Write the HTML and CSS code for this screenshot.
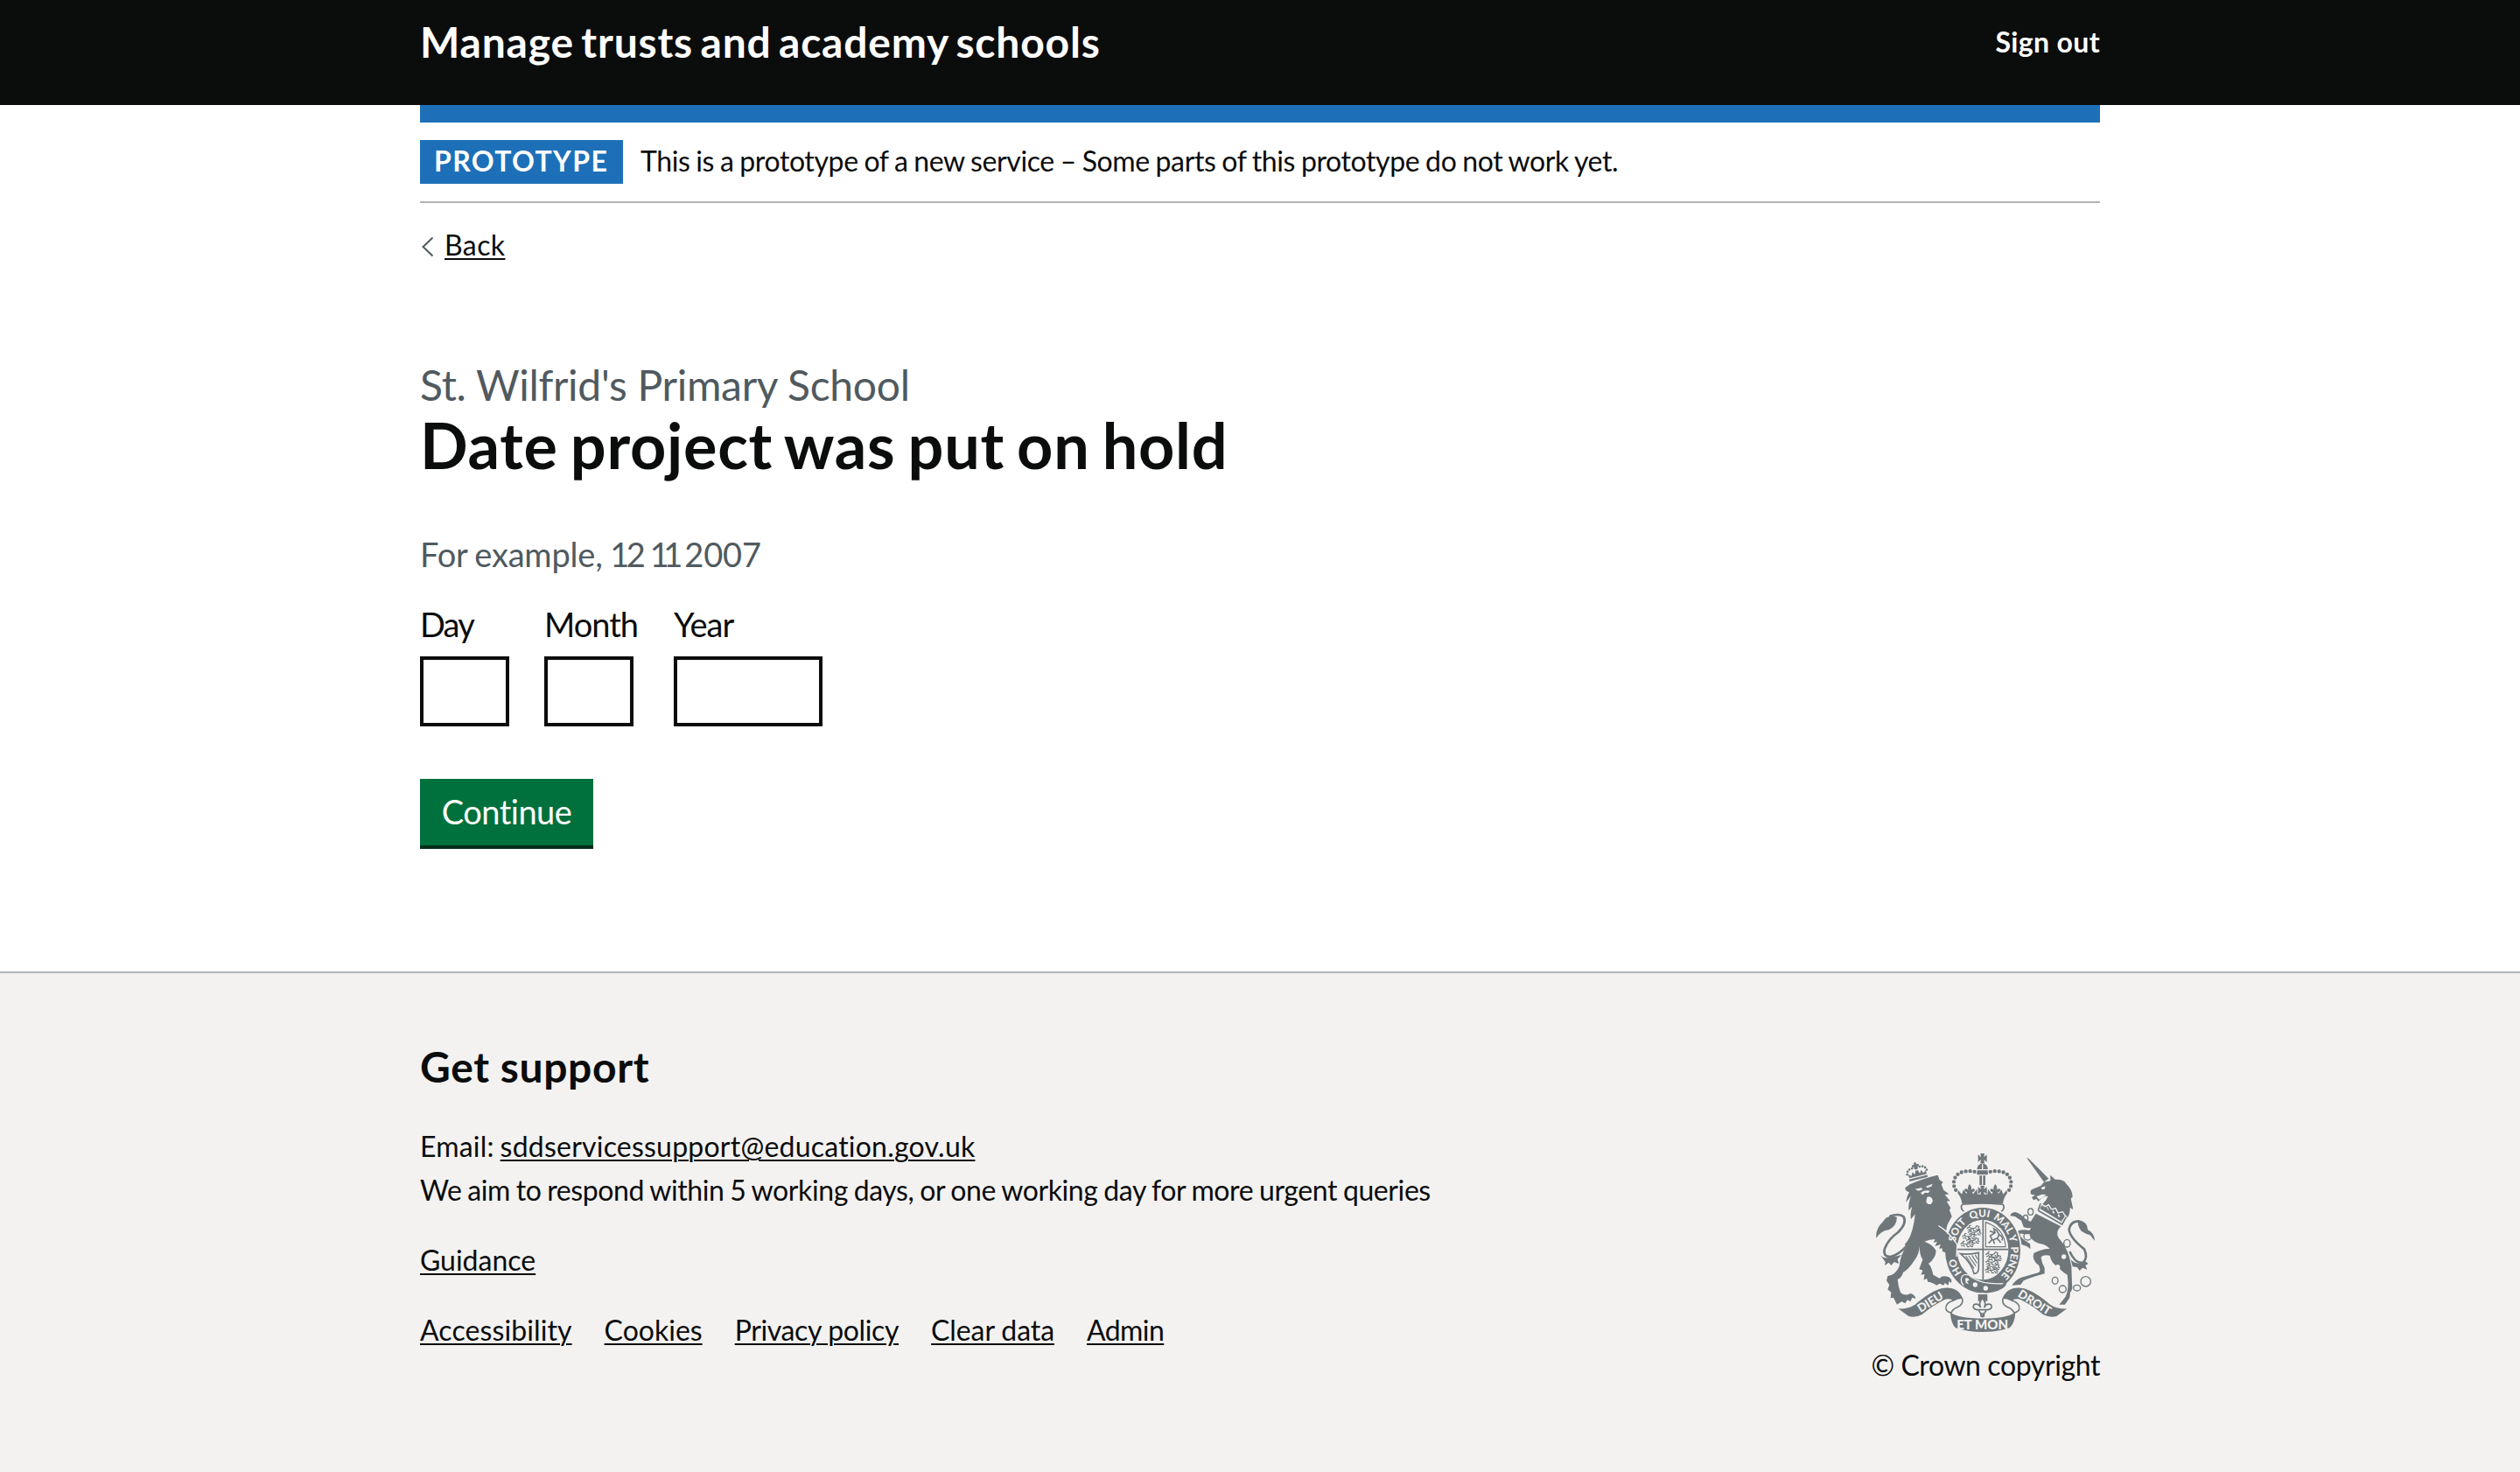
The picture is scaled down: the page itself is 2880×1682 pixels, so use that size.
FILE: index.html
```html
<!DOCTYPE html>
<html lang="en">
<head>
<meta charset="utf-8">
<title>Date project was put on hold - Manage trusts and academy schools</title>
<link rel="stylesheet" href="styles.css">
</head>
<body>
<header class="header">
  <div class="container header-row">
    <a class="service-name" href="#">Manage trusts and academy schools</a>
    <a class="sign-out" href="#">Sign out</a>
  </div>
</header>

<div class="container page">
  <div class="phase-banner">
    <strong class="tag">PROTOTYPE</strong>
    <span class="phase-text">This is a prototype of a new service – Some parts of this prototype do not work yet.</span>
  </div>
  <a class="back-link" href="#"><svg class="chevron" viewBox="0 0 16 26"><path d="M14.500 2.500 L3.500 13 L14.500 23.500"/></svg><span class="link">Back</span></a>
  <main class="main">
    <span class="caption">St. Wilfrid's Primary School</span>
    <h1 class="heading">Date project was put on hold</h1>
    <form>
      <div class="hint">For example, <span class="num-a">12</span> <span class="num-b">11</span> 2007</div>
      <div class="date-input">
        <div class="field field-day"><label for="day" class="label label-day">Day</label><input id="day" class="input" type="text"></div>
        <div class="field field-month"><label for="month" class="label">Month</label><input id="month" class="input" type="text"></div>
        <div class="field"><label for="year" class="label">Year</label><input id="year" class="input input-year" type="text"></div>
      </div>
      <button class="button" type="button">Continue</button>
    </form>
  </main>
</div>

<footer class="footer">
  <div class="container footer-row">
    <div class="support">
      <h2 class="support-title">Get support</h2>
      <p class="support-text"><span class="email-label">Email: </span><a class="link email" href="#">sddservicessupport@education.gov.uk</a><br><span class="response">We aim to respond within 5 working days, or one working day for more urgent queries</span></p>
      <p class="support-text"><a class="link" href="#">Guidance</a></p>
      <ul class="footer-links">
        <li><a class="link accessibility" href="#">Accessibility</a></li>
        <li><a class="link" href="#">Cookies</a></li>
        <li><a class="link privacy" href="#">Privacy policy</a></li>
        <li><a class="link clear" href="#">Clear data</a></li>
        <li><a class="link admin" href="#">Admin</a></li>
      </ul>
    </div>
    <div class="crown">
      <svg class="crest" viewBox="72 54 750 612">
        <defs>
          <path id="garter" d="M438 499 A97 114 0 0 1 438 271 A97 114 0 0 1 438 499"/>
          <g id="fleur"><path d="M0 -16 Q9 -5 5 4 Q14 -4 18 4 Q17 11 9 12 L12 20 H-12 L-9 12 Q-17 11 -18 4 Q-14 -4 -5 4 Q-9 -5 0 -16Z"/></g>
          <path id="cross" d="M-15 -13 L-5 -4 L-7 -17 H7 L5 -4 L15 -13 V13 L5 4 L7 17 H-7 L-5 4 L-15 13Z"/>
          <g id="lions">
            <path d="M0 8 q5 -8 12 -3 q10 4 18 -1 l3 -6 l8 2 l-2 8 l6 2 M2 14 l8 -4 l4 6 M20 8 l4 8 l7 -1 M32 8 l4 7 l7 0 M10 5 q-6 -10 4 -8"/>
          </g>
        </defs>

        <!-- central crown -->
        <use href="#cross" x="437" y="71"/>
        <path d="M418 108 Q420 90 437 88 Q454 90 456 108Z M418 112 H456 Q452 127 437 127 Q422 127 418 112Z"/>
        <path class="cut-line" d="M437 91 V109"/>
        <path d="M427 130 H435 V162 H427Z M439 130 H447 V162 H439Z"/>
        <path class="beads" d="M424 121 L408 116 L390 114 L373 116 L358 121 L346 131 L340 144 L338 158 L341 172 L349 185"/>
        <path class="beads" d="M450 121 L466 116 L484 114 L501 116 L516 121 L528 131 L534 144 L536 158 L533 172 L525 185"/>
        <path d="M352 190 L354 180 L366 194 L372 178 L382 192 Q396 195 406 192 L418 176 L420 194 H454 L456 176 L468 192 Q480 195 492 192 L502 178 L508 194 L520 180 L522 190 Q510 205 507 226 H367 Q364 205 352 190Z"/>
        <use href="#fleur" x="393" y="175"/><use href="#fleur" x="481" y="175"/><use href="#cross" x="437" y="181"/>
        <path class="line" d="M374 253 Q362 245 365 233 Q368 226 382 228 Q437 222 492 228 Q507 226 510 233 Q513 245 501 253"/>

        <!-- lion -->
        <path d="M172 172 L188 160 Q230 140 284 128 L290 145 L302 152 L296 160 L304 180 L322 193 L308 196 L326 217 L314 218 L328 241 L324 248 L332 270 L316 300 L312 322 L346 372 L344 402 L334 395 L336 412 L324 402 L314 412 L316 398 L300 390 L304 378 L288 380 L294 366 L274 372 L282 356 L270 360 L274 348 Q255 348 238 356 Q270 368 278 388 Q276 415 252 432 Q262 440 268 470 L290 482 Q300 470 322 478 Q334 486 330 498 L322 492 L320 506 L308 498 L304 506 L290 500 L280 506 Q262 494 250 494 L246 482 L236 488 L238 468 L226 470 L232 455 L220 450 Q228 430 232 418 Q220 400 222 372 Q218 404 204 420 Q185 450 165 462 Q160 480 146 486 Q148 510 156 530 Q170 545 190 534 Q206 538 208 552 L196 548 L190 562 L180 556 L172 568 L160 562 L144 572 Q138 560 132 548 L122 550 L124 530 L112 520 L118 505 L108 490 L112 474 Q140 470 152 440 Q155 400 178 372 L170 366 Q198 340 206 262 L192 280 Q188 262 196 236 L184 250 Q182 225 192 200 L174 222 Q178 200 186 186 Q172 184 172 172Z"/>
        <path class="cut" d="M205 176 L228 172 L232 177 L218 182Z M243 167 L266 158 L262 167 L248 172Z M225 190 Q235 178 257 182 L251 190 L240 188 L232 196Z M247 204 Q256 198 264 208 Q270 220 260 228 Q246 230 244 218Z"/>
        <g transform="rotate(-14 213 120)">
          <path class="beads small" d="M210 103 Q176 96 178 128 M216 103 Q250 96 248 128"/>
          <path d="M183 132 L181 118 L192 126 L198 114 L204 125 L209 112 H217 L222 125 L228 114 L234 126 L245 118 L243 132Z M181 136 H245 V143 H181Z"/>
          <path d="M209 84 H217 V91 H225 V99 H217 V108 H209 V99 H201 V91 H209Z"/>
        </g>
        <path class="tail" d="M184 364 Q150 402 122 408 Q94 408 102 380 Q114 348 148 324 Q180 292 166 270 Q148 258 118 270"/>
        <path d="M73 344 Q70 310 96 288 Q110 262 143 272 Q146 300 116 316 Q90 318 73 344Z M88 404 Q100 416 120 410 L160 402 L146 416 L150 432 L134 426 L124 438 L116 428 L102 438 L104 426Z"/>

        <!-- unicorn -->
        <path d="M588 68 L596 72 L664 140 L648 152Z"/>
        <path d="M648 152 L670 148 L670 128 L686 143 Q718 142 724 158 Q746 178 746 204 L740 208 L748 246 L737 240 Q738 262 728 274 L722 264 L712 282 L698 262 L690 268 L680 250 L668 256 L660 236 L648 242 L640 230 Q656 216 662 200 Q640 200 634 214 L628 218 L622 210 L612 214 L606 204 L618 197 L604 194 Q598 184 606 178 L638 164Z"/>
        <path class="cut" d="M638 172 L652 166 L650 176 L642 178Z M622 202 L642 194 L656 196 L632 212Z"/>
        <path class="cut-line" d="M638 226 L652 236 L664 230 L674 246 L688 242 L696 258 L712 254 L722 270"/>
        <path class="line" d="M628 250 L636 226 M628 250 L710 297 L724 272"/>
        <path d="M634 243 L640 232 L648 242 L656 236 L664 250 L674 246 L680 260 L692 256 L698 272 L712 268 L709 288Z"/>
        <path d="M620 260 L706 304 Q684 326 700 346 Q732 380 742 440 L744 500 Q748 520 738 530 L736 548 L720 572 L700 572 L722 545 Q735 520 728 470 Q708 458 700 446 Q672 430 668 404 Q645 400 638 410 Q640 430 650 446 L650 466 Q600 480 578 490 L568 504 L538 506 Q550 488 568 480 L630 462 Q638 455 630 437 Q605 420 613 396 Q636 382 668 380 Q652 364 630 362 Q600 352 598 330 Q580 332 566 328 Q564 340 580 350 L600 364 L602 381 L588 372 L560 362 L554 322 Q570 312 598 318 L604 308 Q590 312 578 306 L570 284 L548 270 L532 268 Q534 256 550 255 Q570 262 584 278 L602 288Z"/>
        <path class="tail" d="M736 390 Q756 434 782 428 Q800 412 786 382 Q738 344 734 316 Q738 286 768 286"/>
        <path d="M822 354 Q820 325 798 316 Q798 288 766 282 Q760 300 776 320 Q792 330 806 334Z M740 418 Q760 440 790 424 L800 432 L790 438 L796 452 L780 446 L770 456 L762 444 L746 442Z"/>
        <g class="chain">
          <ellipse cx="602" cy="254" rx="9" ry="11"/><ellipse cx="585" cy="275" rx="8" ry="10"/><circle cx="592" cy="338" r="13"/><ellipse cx="727" cy="362" rx="11" ry="13"/>
          <ellipse cx="686" cy="490" rx="10" ry="12"/><circle cx="712" cy="519" r="12"/><ellipse cx="761" cy="515" rx="12" ry="10"/><circle cx="791" cy="493" r="17"/>
        </g>
        <circle class="cut" cx="716" cy="408" r="8"/><circle class="cut" cx="695" cy="443" r="8"/>

        <!-- garter and shield -->
        <path class="halo" d="M438 240 A129 146 0 1 1 438 532 A129 146 0 1 1 438 240Z"/>
        <path fill-rule="evenodd" d="M438 240 A129 146 0 1 1 438 532 A129 146 0 1 1 438 240Z M438 281 A88 103 0 1 0 438 487 A88 103 0 1 0 438 281Z"/>
        <path class="cut-line" d="M286 302 Q322 322 350 366 L348 408"/>
        <path d="M270 296 Q318 320 346 368 L344 404 L334 394 L336 412 L324 402 L314 412 L316 398 L300 388 L296 366Z"/>
        <path class="line" d="M439 281 V487 M350 383 H526"/>
        <g class="motto">
          <text><textPath href="#garter" startOffset="16.5%">HO</textPath></text>
          <text><textPath href="#garter" startOffset="35%">SOIT</textPath></text>
          <text><textPath href="#garter" startOffset="48.500%">QUI</textPath></text>
          <text><textPath href="#garter" startOffset="63.300%">MAL Y</textPath></text>
          <text><textPath href="#garter" startOffset="81.500%">PENSE</textPath></text>
        </g>
        <g class="charge">
          <use href="#lions" x="384" y="304"/><use href="#lions" x="368" y="332"/><use href="#lions" x="362" y="358"/>
          <use href="#lions" x="388" y="318"/><use href="#lions" x="382" y="346"/>
          <use href="#lions" x="448" y="394"/><use href="#lions" x="458" y="406"/><use href="#lions" x="448" y="420"/><use href="#lions" x="452" y="436"/><use href="#lions" x="446" y="448"/>
          <path d="M448 290 V374 H516 Q514 312 448 290Z"/>
          <path class="thick" d="M458 362 L470 350 L464 336 L480 326 L476 312 L486 318 L494 332 L488 346 L500 360 M480 326 L462 320 M488 344 L474 350 L478 364 M494 332 Q510 340 504 352"/>
          <path class="thick" d="M362 398 Q392 402 424 394 V446 Q424 466 408 466 Q400 430 362 398Z"/>
          <path d="M380 405 L408 448 M390 405 L414 440 M401 403 L418 430 M412 401 L420 416"/>
        </g>
        <path d="M368 476 Q384 464 400 480 Q440 502 506 492 Q530 496 510 514 Q480 534 444 532 Q400 526 382 514 L370 500Z"/>
        <path class="cut" d="M378 482 Q388 478 392 488 L384 492 L390 502 L380 498Z"/>
        <path class="cut-line" d="M372 506 Q358 490 368 474 Q384 462 402 480 Q440 504 508 500"/>
        <circle class="cut" cx="412" cy="504" r="8"/><circle class="cut" cx="448" cy="516" r="8"/>

        <!-- scroll -->
        <g id="scroll-side">
          <path d="M148 586 Q182 588 206 572 Q262 524 300 516 Q352 508 370 552 Q354 550 338 560 Q324 548 306 556 Q266 576 230 606 Q208 618 184 612Z"/>
          <path class="line" d="M338 558 Q308 566 312 588 Q316 598 330 600 Q334 588 354 580 Q372 570 368 552"/>
        </g>
        <use href="#scroll-side" transform="translate(875 0) scale(-1 1)"/>
        <path d="M326 598 Q352 620 437 620 Q524 620 550 598 Q548 638 530 652 Q490 666 437 666 Q385 666 345 652 Q330 640 326 598Z"/>
        <g class="scroll-text">
          <text x="437" y="657">ET MON</text>
          <text class="scroll-end" transform="translate(262 570) rotate(-32)" y="6">DIEU</text>
          <text class="scroll-end" transform="translate(612 571) rotate(32)" y="6">DROIT</text>
        </g>
        <path d="M422 537 H454 V560 H446 L437 548 L430 560 H422Z"/>
        <path class="line" d="M437 550 Q452 566 443 582 Q452 566 466 572 Q474 586 456 590 H418 Q400 586 408 572 Q422 566 431 582 Q422 566 437 550Z"/>
        <path class="line" d="M424 592 L437 612 L450 592"/><circle class="chain" cx="437" cy="608" r="6"/>
      </svg>
      <a class="copyright" href="#">© Crown copyright</a>
    </div>
  </div>
</footer>
</body>
</html>
```
FILE: styles.css
```css
* { box-sizing: border-box; }
body {
  margin: 0;
  min-height: 1682px;
  display: flex;
  flex-direction: column;
  background: #fff;
  color: #0b0c0c;
  font: 32px/50px Lato, "Noto Sans", sans-serif;
}
a { color: inherit; text-decoration: none; }
.container { width: 1920px; margin: 0 auto; }
.link {
  text-decoration: underline;
  text-decoration-thickness: 2px;
  text-underline-offset: 3px;
}

.header { height: 120px; padding-top: 18px; background: #0b0c0c; color: #fff; }
.header-row { display: flex; justify-content: space-between; align-items: center; height: 60px; }
.service-name { font-size: 48px; font-weight: 700; line-height: 60px; letter-spacing: 0.8px; word-spacing: -4px; }
.sign-out { font-weight: 700; letter-spacing: 0.35px; }

.page { border-top: 20px solid #1d70b8; height: 990px; }
.phase-banner { display: flex; gap: 20px; padding: 20px 0; border-bottom: 2px solid #b1b4b6; }
.tag {
  width: 232px;
  height: 50px;
  padding-left: 16px;
  background: #1d70b8;
  color: #fff;
  line-height: 48px;
  letter-spacing: 1.38px;
}
.phase-text { line-height: 48px; letter-spacing: -0.38px; word-spacing: -1px; }
.back-link { display: flex; align-items: center; width: max-content; margin-top: 28px; line-height: 40px; letter-spacing: 0.4px; }
.chevron { width: 16px; height: 26px; margin: 4px 12px 0 0; fill: none; stroke: #505a5f; stroke-width: 2; }

.main { padding-top: 110px; }
.caption { display: block; color: #505a5f; font-size: 48px; line-height: 60px; letter-spacing: -0.3px; }
.heading { margin: 0 0 62px; font-size: 72px; line-height: 76px; letter-spacing: 0.7px; word-spacing: -4px; }
.hint { color: #505a5f; font-size: 38px; letter-spacing: -0.2px; word-spacing: -1px; margin-bottom: 30px; }
.num-a { letter-spacing: -3.500px; }
.num-b { letter-spacing: -6.500px; }
.date-input { display: flex; margin-bottom: 60px; }
.field { display: flex; flex-direction: column; gap: 12px; }
.field-day { width: 142px; }
.field-month { width: 148px; }
.label { font-size: 38px; letter-spacing: -1px; }
.label-day { letter-spacing: -1.800px; }
.input { width: 102px; height: 80px; padding: 0; border: 4px solid #0b0c0c; border-radius: 0; background: #fff; }
.input-year { width: 170px; }
.button {
  display: block;
  width: 198px;
  height: 76px;
  padding: 0 0 1px;
  border: 0;
  background: #00703c;
  box-shadow: 0 4px 0 #002d18;
  color: #fff;
  font: 38px/75px Lato, "Noto Sans", sans-serif;
  letter-spacing: -0.5px;
}

.footer { flex: 1; border-top: 2px solid #b1b4b6; background: #f3f2f1; padding-top: 77px; }
.footer-row { display: flex; justify-content: space-between; align-items: flex-end; }
.support { padding-bottom: 40px; }
.support-title { margin: 0 0 36px; font-size: 48px; line-height: 60px; letter-spacing: 0.6px; }
.support-text { margin: 0 0 30px; }
.email-label { letter-spacing: 0.2px; word-spacing: -1.500px; }
.email { letter-spacing: 0.22px; }
.response { letter-spacing: -0.4px; word-spacing: -1px; }
.footer-links { display: flex; gap: 37px; margin: 0; padding: 0; list-style: none; }
.accessibility { letter-spacing: 0.1px; }
.privacy { letter-spacing: -0.37px; }
.clear { letter-spacing: -0.1px; }
.admin { letter-spacing: -0.56px; }
.crown { display: flex; flex-direction: column; align-items: center; gap: 13px; }
.copyright { letter-spacing: -0.4px; }

.crest { width: 250px; height: 204px; fill: #6f777b; }
.crest .line { fill: none; stroke: #6f777b; stroke-width: 5; }
.crest .tail { fill: none; stroke: #6f777b; stroke-width: 8; }
.crest .beads { fill: none; stroke: #6f777b; stroke-width: 13; stroke-linecap: round; stroke-dasharray: 0 15; }
.crest .small { stroke-width: 8; stroke-dasharray: 0 10; }
.crest .cut { fill: #f3f2f1; }
.crest .cut-line { fill: none; stroke: #f3f2f1; stroke-width: 4; }
.crest .halo { fill: none; stroke: #f3f2f1; stroke-width: 10; }
.crest .chain, .crest .charge { fill: none; stroke: #6f777b; stroke-width: 4; }
.crest .charge { stroke-width: 3.500; }
.crest .thick { stroke-width: 5; }
.crest text { fill: #f3f2f1; font-weight: 900; letter-spacing: 0; text-anchor: middle; }
.motto { font-size: 35px; }
.scroll-text { font-size: 45px; }
.scroll-end { font-size: 40px; }
```
